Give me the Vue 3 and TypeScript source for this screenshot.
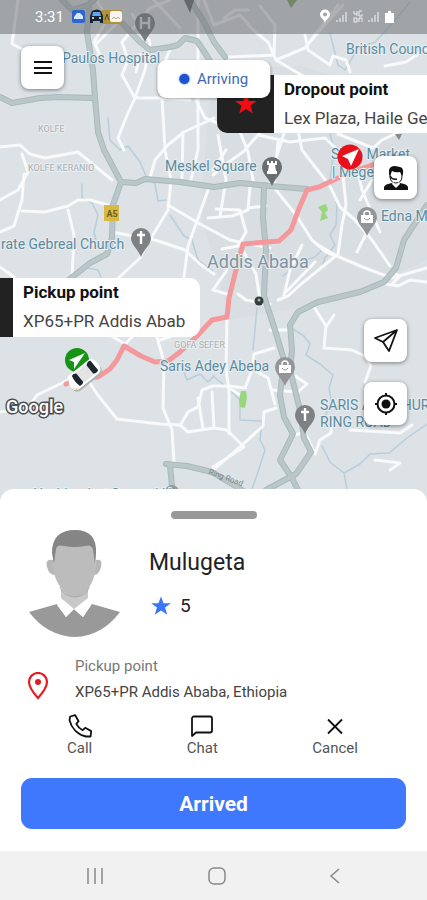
<script setup lang="ts">
interface MapLabel {
  text: string
  x: number
  y: number
  kind: 'place' | 'city' | 'area'
}

const labels: MapLabel[] = [
  { text: 'Paulos Hospital', x: 62, y: 63, kind: 'place' },
  { text: 'British Counc', x: 346, y: 54, kind: 'place' },
  { text: 'Meskel Square', x: 165, y: 171, kind: 'place' },
  { text: 'Shiro Market', x: 331, y: 159, kind: 'place' },
  { text: '| Megenagna', x: 332, y: 177, kind: 'place' },
  { text: 'Edna M', x: 381, y: 221, kind: 'place' },
  { text: 'rate Gebreal Church', x: 1, y: 249, kind: 'place' },
  { text: 'Saris Adey Abeba', x: 160, y: 371, kind: 'place' },
  { text: 'SARIS ABO CHUR', x: 320, y: 410, kind: 'place' },
  { text: 'RING ROAD', x: 320, y: 427, kind: 'place' },
  { text: 'Addis Ababa', x: 207, y: 268, kind: 'city' },
  { text: 'KOLFE', x: 38, y: 132, kind: 'area' },
  { text: 'KOLFE KERANIO', x: 28, y: 171, kind: 'area' },
  { text: 'GOFA SEFER', x: 174, y: 348, kind: 'area' },
]

const streets: string[] = [
  'M18 0 12 44 28 52M0 147 20 145 30 154 45 158 78 152 112 180',
  'M22 154 28 172 18 190 0 200M24 174 22 200 14 226 0 232M22 211 45 212 68 206 78 200 90 200 108 205',
  'M68 210 74 235 72 277M0 267 14 277M112 232 155 240 185 250 200 264 214 274',
  'M170 0 150 8 122 42 128 60 122 75 135 98 162 98 190 100M132 14 150 42 145 70 135 98 125 120 118 138 124 150',
  'M154 0 180 28M96 0 108 18 94 42 100 55 88 60M122 18 95 45M162 98 165 150 171 180 168 210 145 248 140 258 112 284',
  'M170 50 160 72M140 55 136 72M214 118 184 132 168 145 155 160 150 178M182 178 183 132M196 100 205 118 230 128',
  'M198 0 198 150 191 180M204 0 214 25 240 15 253 30 268 42 276 60M224 18 235 10 248 10M260 6 275 25 274 55 229 57',
  'M168 205 200 224 230 240 270 248M208 190 196 224 188 246 184 277M208 218 232 216 248 210 250 186',
  'M276 60 305 48 320 30 343 5M276 60 303 76M305 35 308 50 330 65 333 56 346 60 350 72M305 48 338 5M385 66 406 62 427 48',
  'M270 122 258 135 243 152 226 164 213 175M258 135 290 142 325 138 348 160M285 130 277 155 270 186M240 132 248 152 254 185',
  'M218 135 226 180 220 216M296 120 302 150 330 186 340 207 355 220 372 240 390 266',
  'M276 190 296 215 312 240 326 252 336 256M343 175 346 205 342 225 338 254 300 285 288 296 278 300M355 160 362 190 380 232',
  'M320 246 337 256 365 268 392 278 427 268M302 245 290 270 284 295M315 262 286 292',
  'M366 234 357 252M372 180 360 200M338 134 373 148 382 140 407 128M278 142 274 186M266 206 248 208',
  'M226 150 213 170M238 294 246 300 270 304M216 209 240 210 246 232 238 246 222 249M239 244 256 274 260 300',
  'M227 270 213 290 227 294M183 332 160 340M108 334 125 344 135 334M157 337 164 362 163 408 172 430 174 462',
  'M0 412 28 408 37 395 66 381 84 374 97 394 117 419 160 424 180 425M181 424 188 412 198 407 202 390 213 386 226 386 240 395',
  'M198 398 203 428M212 392 214 428M180 425 188 432 214 428 227 430 244 447 213 467M213 470 240 447 263 426 264 412 276 408',
  'M227 320 226 370 229 390 229 434M229 386 245 388 252 370 254 354 274 348M270 330 290 330M254 370 268 378 275 404',
  'M272 390 298 392 307 384 295 376M314 307 326 326 324 348 352 350 365 356 371 366 365 382M326 327 334 315',
  'M295 435 305 432 315 454 320 440 331 433 332 420M375 460 400 463 390 470M350 430 400 433 412 425',
  'M386 284 398 286 410 280 427 282M391 285 400 276 391 272',
]

const creeks: string[] = [
  'M108 118 110 140 120 150 128 146 140 162 146 176 155 184 158 201 166 200',
  'M82 184 82 198 92 203 98 215 94 232 97 245M76 276 87 268 98 270 101 277',
  'M170 215 184 236 192 240 198 260 213 271M180 362 187 380 200 374 208 382 214 376',
  'M328 125 334 150 330 180 337 205 336 225 330 235 335 245 325 258 321 269',
  'M288 326 304 336 310 344 306 355 320 364 333 375 329 388 332 404 322 420',
  'M213 376 230 390 240 400 240 420 262 421 260 440 265 450 257 475 252 489',
  'M322 446 330 462 344 473 347 489M344 473 360 464 370 454 389 453 407 438 427 424',
  'M257 308 253 350M330 33 338 65 345 70 358 48 375 42 392 24 410 2M283 276 300 262 315 257 324 248',
]

const highways: string[] = [
  'M62 0 72 10 88 5 94 0M89 8 87 32 93 70 95 98 98 132 104 150 121 182 113 205 112 238 107 254 90 263 66 282',
  'M0 97 12 103 40 98 58 97 94 98',
  'M121 22 140 42 150 50 170 47 178 45 185 38 197 41 207 56 216 72',
  'M190 0 204 22 214 42 225 57',
  'M121 182 136 183 145 179 180 182 214 187 240 183 270 186 307 189',
  'M264 185 263 218 266 250 264 296 275 330 284 360 280 395 284 417 293 434 280 460 292 478 300 494',
  'M427 205 404 240 396 268 384 282 360 292 318 302 298 312 290 325 292 350 290 370 300 410 304 438 311 452 296 474 266 490',
  'M166 464 187 466 212 472 242 490M170 466 173 496',
]

interface RideAction {
  label: string
  icon: string
}

const actions: RideAction[] = [
  {
    label: 'Call',
    icon: 'M2.200 2.500 7.200 1.200 10.600 7.200 8.300 9.800C9.800 12.800 11.800 14.800 14.700 16.200L17.200 13.800 23.200 17.100 22.600 22.500 18 22.500C9.500 20.500 3.500 14 1.500 6.200Z',
  },
  { label: 'Chat', icon: 'M4 2.5H20A2 2 0 0 1 22 4.5V16.5A2 2 0 0 1 20 18.5H6L2 22V4.5A2 2 0 0 1 4 2.5Z' },
  { label: 'Cancel', icon: 'M5 5.5 19 19.5M19 5.5 5 19.5' },
]

const starPath = 'M12 1.5 14.8 9H22.8L16.4 13.7 18.8 21.6 12 17 5.2 21.6 7.6 13.7 1.2 9H9.2Z'
const pinPath = 'M0 0C-3-8-10-12-10-19A10 10 0 1 1 10-19C10-12 3-8 0 0Z'
</script>

<template>
  <div class="screen">
    <main class="map">
      <svg class="tiles" viewBox="0 0 427 501" preserveAspectRatio="xMidYMin slice" aria-label="Map of Addis Ababa">
        <rect width="427" height="501" fill="#dde2e6" />
        <path d="M213 70 300 66 427 100V260L340 300 230 320 200 210Z" fill="#d7dce1" opacity=".65" />
        <g class="creeks"><path v-for="d in creeks" :key="d" :d="d" /></g>
        <g class="streets"><path v-for="d in streets" :key="d" :d="d" /></g>
        <g class="highway-edge"><path v-for="d in highways" :key="d" :d="d" /></g>
        <g class="highway"><path v-for="d in highways" :key="d" :d="d" /></g>
        <g fill="#98d77c">
          <path d="M318 207 326 204 328 210 325 213 328 218 320 221 322 212Z" />
          <path d="M241 391 246 391 247 398 245 408 240 407 239 400Z" />
          <path d="M287 0H297L291 8Z" fill="#78a957" />
        </g>
        <path
          class="route"
          d="M66 384 82 378 98 377 110 369 117 360 124 346 141 356 155 362 168 361 180 352 197 336 212 320 227 317 229 298 236 270 243 244 279 241 291 230 298 211 307 190 319 187 338 178M343 175 375 164"
        />

        <rect x="104" y="205" width="15" height="16" fill="#d9b944" />
        <text x="112" y="217" class="shield">A5</text>
        <text v-for="l in labels" :key="l.text" :x="l.x" :y="l.y" :class="l.kind">{{ l.text }}</text>
        <text class="street-name" transform="translate(208 474) rotate(20)">Ring Road</text>

        <g transform="translate(145 42)">
          <path :d="pinPath" fill="#777c80" />
          <path d="M-4-25V-13M4-25V-13M-4-19H4" stroke="#e5e7e8" stroke-width="2.4" />
        </g>
        <path d="M184 0H194L190 13Z" fill="#62686b" />
        <g v-for="p in [[141, 257], [305, 434]]" :key="p[0]" :transform="`translate(${p[0]} ${p[1]})`">
          <path :d="pinPath" fill="#7d8184" />
          <path d="M0-26V-13M-4-22H4" stroke="#fff" stroke-width="2.4" />
        </g>
        <g transform="translate(272 186)">
          <path :d="pinPath" fill="#686d70" />
          <path d="M-5-25H-3V-23H-1V-25H1V-23H3V-25H5V-21H3L4-15H5V-12H-5V-15H-4L-3-21H-5Z" fill="#fff" />
        </g>
        <g v-for="p in [[367, 236], [285, 386]]" :key="p[0]" :transform="`translate(${p[0]} ${p[1]})`">
          <path :d="pinPath" fill="#929698" />
          <path d="M-3-20V-22A3 3 0 0 1 3-22V-20" fill="none" stroke="#fff" stroke-width="1.5" />
          <path d="M-6-21H6V-13H-6Z" fill="#fff" />
          <path d="M-3-18Q0-14 3-18" fill="none" stroke="#929698" />
        </g>
        <circle cx="259" cy="301" r="4.5" fill="#373b3e" />
        <circle cx="259" cy="300" r="1.5" fill="#a7aeb1" />
        <path d="M395 134H402L399 140Z" fill="#848b8f" />
        <circle cx="172" cy="492" r="7" fill="#969a9d" />
        <text x="34" y="499" class="place">Yeshimebet General Hosp</text>
        <text x="6" y="413" class="brand">Google</text>

        <g transform="translate(350 157)">
          <circle r="12.5" fill="#e8101a" />
          <path d="M9-8-8-1-2 2 1 9Z" fill="#fff" />
        </g>
        <g transform="translate(77 360)">
          <circle r="12" fill="#169414" />
          <path d="M8-7-8 0-3 2-3 9Z" fill="#fff" />
        </g>
        <g transform="translate(84 375) rotate(-39)">
          <rect x="-18" y="-8" width="36" height="18" rx="6" fill="#aeb2b5" />
          <rect x="-18" y="-9" width="36" height="17" rx="6" fill="#fff" />
          <rect x="-5" y="-7" width="13" height="13" rx="2" fill="#e3e5e5" />
          <path d="M-10-7Q-7-8-5-6V5Q-7 7-10 6Q-12 0-10-7ZM8-6Q12-9 14-7V5Q12 7 8 5Z" fill="#1c2530" />
          <path d="M-18-5V0L-15-7Z" fill="#f1a099" />
          <path d="M-18 3 -15 7 -12 7Z" fill="#f1d3a0" />
        </g>
      </svg>

      <header class="status">
        <span class="clock">3:31</span>
        <svg class="notices" width="52" height="16" viewBox="0 0 52 16" aria-hidden="true">
          <rect y="1" width="13" height="13" rx="2" fill="#2f65cf" />
          <path d="M2 8 5 4H8L11 7V10H2Z" fill="#d8e9ff" />
          <rect x="30" y="1" width="20" height="14" fill="#b19238" />
          <path d="M20 2Q25-1 29 2L31 7V14H28V12H21V14H18V7Z" fill="#172434" />
          <path d="M21 3H28L29 7H20Z" fill="#60a8e9" />
          <path d="M20 9H22M27 9H29" stroke="#fff" stroke-width="1.5" />
          <path d="M33 11 35 5 37 11" fill="none" stroke="#514724" />
          <rect x="38" y="2" width="12" height="11" rx="2" fill="#f6f4ef" />
          <path d="M40 10 42 8 44 10 46 8 48 10" fill="none" stroke="#b5a792" />
        </svg>
        <svg class="signals" width="76" height="16" viewBox="0 0 76 16" aria-hidden="true">
          <path fill-rule="evenodd" d="M6 14C5 10 1 9 1 5.500A5 5 0 0 1 11 5.500C11 9 7 10 6 14ZM6 3.500A2 2 0 1 0 6 7.500A2 2 0 0 0 6 3.500Z" fill="#fff" />
          <path d="M18 13V11M21 13V9M24 13V6M27 13V3M50 13V11M53 13V9M56 13V6M59 13V3" stroke="#d9dbdc" stroke-width="1.5" />
          <path d="M35 2V5H38M38 2V7M43 2H40V7H43V5M35 9H38V13H35ZM40 13V9H43V13" fill="none" stroke="#eee" />
          <path d="M67 4H69V2H72V4H75V14H66V4Z" fill="#fff" />
        </svg>
      </header>

      <section class="callout dropout">
        <div class="badge">
          <svg width="24" height="24" viewBox="0 0 24 24" aria-hidden="true"><path :d="starPath" fill="#f20d12" /></svg>
        </div>
        <div class="callout-text">
          <h2>Dropout point</h2>
          <p>Lex Plaza, Haile Ge</p>
        </div>
      </section>
      <section class="callout pickup">
        <div class="badge"></div>
        <div class="callout-text">
          <h2>Pickup point</h2>
          <p>XP65+PR Addis Abab</p>
        </div>
      </section>

      <div class="chip"><span class="dot"></span>Arriving</div>

      <button class="tool menu" type="button" aria-label="Menu">
        <svg width="20" height="16" viewBox="0 0 20 16"><path d="M1 2H19M1 8H19M1 13H19" stroke="#111" stroke-width="2" /></svg>
      </button>
      <button class="tool rider" type="button" aria-label="Rider">
        <svg width="28" height="28" viewBox="0 0 28 28">
          <path d="M2 26V23Q3 20 10 19Q14 23 18 19Q25 20 26 23V26Z" fill="#111" />
          <path d="M8 8V12Q8 19 14 19 20 19 20 12V8" fill="#fff" stroke="#111" />
          <path d="M7 10V6Q8 2 13 2L18 3Q22 4 21 10L20 12 18 8Q13 9 10 7L8 12Z" fill="#111" />
          <path d="M8 12Q10 16 15 15" fill="none" stroke="#111" stroke-width="1.500" />
          <path d="M11 18 14 21 17 18 18 20 14 24 10 20Z" fill="#fff" />
        </svg>
      </button>
      <button class="tool navigate" type="button" aria-label="Navigate">
        <svg width="26" height="26" viewBox="0 0 26 26" fill="none" stroke="#111" stroke-width="1.800" stroke-linejoin="round">
          <path d="M24 2 2 10 10 14 16 23ZM24 2 10 14" />
        </svg>
      </button>
      <button class="tool locate" type="button" aria-label="My location">
        <svg width="26" height="26" viewBox="0 0 26 26" fill="none" stroke="#111" stroke-width="2">
          <circle cx="13" cy="13" r="8.500" />
          <circle cx="13" cy="13" r="4.500" fill="#111" stroke="none" />
          <path d="M13 2V5M13 21V24M2 13H5M21 13H24" />
        </svg>
      </button>
    </main>

    <section class="sheet">
      <div class="handle"></div>
      <div class="profile">
        <svg class="avatar" width="92" height="108" viewBox="0 0 92 108" aria-label="Driver photo">
          <path d="M32 60V72L46 82 59 72V60Z" fill="#c8c8c8" />
          <path d="M24 31Q16 29 18 38 20 46 26 46ZM67 31Q74 29 72 38 70 46 65 46Z" fill="#b6b6b6" />
          <path d="M25 16Q32 5 46 6 60 5 66 18L67 38Q65 54 57 62 46 74 35 62 26 54 24 38Z" fill="#bcbcbc" />
          <path d="M25 35 23 24Q23 1 46 1 68 1 67 24L66 35 64 20Q62 15 56 17 46 19 35 17 28 15 27 20Z" fill="#858585" />
          <path d="M31 58Q34 67 46 68 58 67 60 58" fill="none" stroke="#aaa" />
          <path d="M0 83 28 75 37 88 45 80 54 88 63 75 91 83Q73 107 46 108 18 107 0 83Z" fill="#999" />
          <path d="M32 69 28 76 37 88 45 80 54 88 62 76 59 69 45 80Z" fill="#fff" />
        </svg>
        <div>
          <h1>Mulugeta</h1>
          <p class="rating">
            <svg width="22" height="22" viewBox="0 0 24 24" aria-hidden="true"><path :d="starPath" fill="#3a76f5" /></svg>
            5
          </p>
        </div>
      </div>

      <div class="address">
        <svg width="22" height="28" viewBox="0 0 22 28" fill="none" stroke="#e51a20" stroke-width="2.200" aria-hidden="true">
          <path d="M11 26Q2 16 2 10A9 9 0 0 1 20 10Q20 16 11 26Z" />
          <circle cx="11" cy="10" r="3" fill="#e51a20" stroke="none" />
        </svg>
        <div>
          <p class="address-label">Pickup point</p>
          <p>XP65+PR Addis Ababa, Ethiopia</p>
        </div>
      </div>

      <div class="actions">
        <button v-for="a in actions" :key="a.label" type="button">
          <svg width="24" height="24" viewBox="0 0 24 24" fill="none" stroke="#111" stroke-width="1.800" stroke-linejoin="round" aria-hidden="true">
            <path :d="a.icon" />
          </svg>
          {{ a.label }}
        </button>
      </div>

      <button class="primary" type="button">Arrived</button>
    </section>

    <nav class="system-nav">
      <button type="button" aria-label="Recent apps">
        <svg width="18" height="18" viewBox="0 0 18 18"><path d="M2 1V17M9 1V17M16 1V17" /></svg>
      </button>
      <button type="button" aria-label="Home">
        <svg width="18" height="18" viewBox="0 0 18 18"><rect x="1" y="1" width="16" height="16" rx="5" /></svg>
      </button>
      <button type="button" aria-label="Back">
        <svg width="12" height="18" viewBox="0 0 12 18"><path d="M10 2 2 9 10 16" /></svg>
      </button>
    </nav>
  </div>
</template>

<style>
body {
  margin: 0;
}
</style>

<style scoped>
.screen {
  display: flex;
  flex-direction: column;
  min-height: 100vh;
  overflow: hidden;
  background: #fff;
  color: #222;
  font-family: Roboto, sans-serif;
}
h1,
h2,
p {
  margin: 0;
  font-weight: 400;
}
svg {
  display: block;
  flex: none;
}
button {
  padding: 0;
  border: 0;
  background: none;
  color: inherit;
  font: inherit;
  cursor: pointer;
}
.map {
  position: relative;
  flex: 1;
  min-height: 460px;
  overflow: hidden;
}
.tiles {
  position: absolute;
  inset: 0;
  width: 100%;
  height: 100%;
}
.streets,
.creeks,
.highway,
.highway-edge,
.route {
  fill: none;
  stroke-linejoin: round;
  stroke-linecap: round;
}
.streets {
  stroke: #f8fafb;
  stroke-width: 3;
}
.creeks {
  stroke: #b9cedb;
  stroke-width: 1.5;
}
.highway-edge {
  stroke: #a9b9bc;
  stroke-width: 6;
}
.highway {
  stroke: #bac7c9;
  stroke-width: 4;
}
.route {
  stroke: #f4989b;
  stroke-width: 5;
}
.place,
.city,
.area {
  paint-order: stroke;
  stroke: #e8edf0;
  stroke-width: 2;
}
.place {
  fill: #5c8b9f;
  font-size: 14px;
}
.city {
  fill: #7d93a1;
  font-size: 18px;
}
.area {
  fill: #a9b0b5;
  font-size: 9px;
}
.street-name {
  fill: #7c8589;
  font-size: 8px;
}
.shield {
  fill: #6c5c20;
  font-size: 9px;
  font-weight: 700;
  text-anchor: middle;
}
.brand {
  fill: #fff;
  stroke: #4c4f51;
  stroke-width: 3;
  paint-order: stroke;
  font-size: 18px;
  font-weight: 500;
}
.status {
  position: absolute;
  inset: 0 0 auto;
  display: flex;
  align-items: center;
  box-sizing: border-box;
  height: 34px;
  padding: 0 32px 0 35px;
  background: rgba(105, 108, 109, 0.52);
  color: #fff;
  font-size: 15px;
}
.notices {
  margin-left: 8px;
}
.signals {
  margin-left: auto;
}
.callout {
  position: absolute;
  display: flex;
  overflow: hidden;
  border-radius: 10px;
  background: #fff;
  white-space: nowrap;
}
.dropout {
  top: 75px;
  left: 217px;
  right: -12px;
  height: 58px;
}
.pickup {
  top: 278px;
  left: -44px;
  width: 244px;
  height: 59px;
}
.badge {
  display: flex;
  flex: none;
  align-items: center;
  justify-content: center;
  width: 57px;
  background: #222;
}
.callout-text {
  margin-left: 10px;
}
.callout h2 {
  color: #111;
  font-size: 17px;
  font-weight: 700;
  line-height: 29px;
}
.callout p {
  color: #444;
  font-size: 17px;
  line-height: 28px;
}
.chip {
  position: absolute;
  top: 60px;
  left: 50%;
  display: flex;
  align-items: center;
  gap: 8px;
  box-sizing: border-box;
  height: 38px;
  padding: 0 22px;
  border-radius: 9px;
  background: #fff;
  box-shadow: 0 1px 3px rgba(0, 0, 0, 0.35);
  color: #3a68bb;
  font-size: 15px;
  transform: translateX(-50%);
}
.dot {
  width: 10px;
  height: 10px;
  border-radius: 50%;
  background: #1c54d0;
  box-shadow: 0 0 2px #1c54d0;
}
.tool {
  position: absolute;
  display: flex;
  align-items: center;
  justify-content: center;
  width: 43px;
  height: 43px;
  border-radius: 8px;
  background: #fff;
  box-shadow: 0 1px 4px rgba(0, 0, 0, 0.45);
}
.menu {
  top: 46px;
  left: 21px;
}
.rider {
  top: 156px;
  right: 10px;
}
.navigate {
  top: 319px;
  right: 20px;
}
.locate {
  top: 382px;
  right: 20px;
}
.sheet {
  position: relative;
  margin-top: -12px;
  padding: 22px 21px;
  border-radius: 14px 14px 0 0;
  background: #fff;
}
.handle {
  width: 86px;
  height: 8px;
  margin: 0 auto;
  border-radius: 4px;
  background: #999;
}
.profile {
  display: flex;
  align-items: center;
  gap: 28px;
  margin-top: 10px;
  padding-left: 8px;
}
.profile h1 {
  color: #222;
  font-size: 23px;
  line-height: 42px;
}
.rating {
  display: flex;
  align-items: center;
  gap: 8px;
  padding-left: 1px;
  color: #222;
  font-size: 19px;
  line-height: 44px;
}
.profile > div {
  padding-top: 4px;
}
.address {
  display: flex;
  align-items: center;
  gap: 26px;
  margin-top: 16px;
  padding-left: 6px;
  color: #444;
  font-size: 15px;
  line-height: 26px;
}
.address svg {
  margin-top: 14px;
}
.address-label {
  color: #777;
}
.actions {
  display: flex;
  justify-content: space-between;
  margin-top: 9px;
  padding: 0 48px 0 46px;
}
.actions button {
  display: flex;
  flex-direction: column;
  align-items: center;
  color: #555;
  font-size: 15px;
  line-height: 20px;
}
.primary {
  display: block;
  width: 100%;
  height: 51px;
  margin-top: 20px;
  border-radius: 11px;
  background: #3f78fc;
  color: #fff;
  font-size: 21px;
  font-weight: 700;
}
.system-nav {
  display: flex;
  align-items: center;
  justify-content: space-between;
  height: 49px;
  padding: 0 86px;
  background: #f1f1f1;
}
.system-nav svg {
  fill: none;
  stroke: #888;
  stroke-width: 1.5;
}
</style>
